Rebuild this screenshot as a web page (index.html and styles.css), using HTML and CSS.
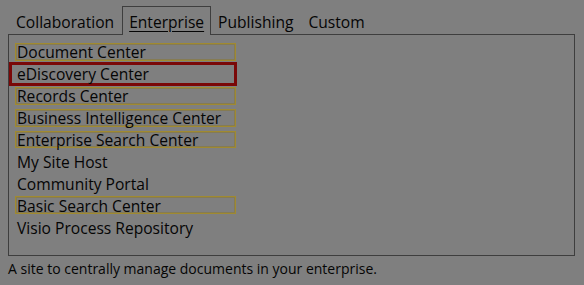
FILE: index.html
```html
<!DOCTYPE html>
<html>
<head>
<meta charset="utf-8">
<link rel="stylesheet" href="styles.css">
</head>
<body>
<div class="dialog">
  <div class="tabs">
    <div class="tab">Collaboration</div>
    <div class="tab active"><span class="u">Enterprise</span></div>
    <div class="tab">Publishing</div>
    <div class="tab">Custom</div>
  </div>
  <div class="panel">
    <ul class="list">
      <li class="item hl">Document Center</li>
      <li class="item sel">eDiscovery Center</li>
      <li class="item hl">Records Center</li>
      <li class="item hl">Business Intelligence Center</li>
      <li class="item hl">Enterprise Search Center</li>
      <li class="item">My Site Host</li>
      <li class="item">Community Portal</li>
      <li class="item hl">Basic Search Center</li>
      <li class="item">Visio Process Repository</li>
    </ul>
  </div>
  <p class="desc">A site to centrally manage documents in your enterprise.</p>
</div>
</body>
</html>
```

FILE: styles.css
```css
html, body {
  margin: 0;
  padding: 0;
  background: #7f7f7f;
}
.dialog {
  font-family: "Open Sans", "Noto Sans", sans-serif;
  color: #050505;
  width: 584px;
  height: 285px;
  padding: 6px 0 0 8px;
  box-sizing: border-box;
}
.tabs {
  display: flex;
  align-items: flex-end;
  height: 28px;
  padding-left: 8px;
  font-size: 15.6px;
}
.tab {
  padding: 0 0 2px 0;
  line-height: 20px;
}
.tab.active {
  border: 1px solid #3e3e3e;
  border-bottom: none;
  background: #7f7f7f;
  padding: 5px 6px 3px 6px;
  margin: 0 7px -1px 8px;
  position: relative;
  z-index: 1;
}
.tab:last-child { margin-left: 15px; }
.u { text-decoration: underline; text-underline-offset: 3px; }
.panel {
  width: 567px;
  height: 222px;
  border: 1px solid #3e3e3e;
  box-sizing: border-box;
  padding: 6px 0 0 0;
}
.list {
  list-style: none;
  margin: 0;
  padding: 0;
  display: flex;
  flex-direction: column;
  font-size: 15.6px;
}
.item {
  height: 21.9px;
  padding: 1px 0 0 8px;
  display: flex;
  align-items: center;
  box-sizing: border-box;
  flex: none;
}
.item.hl {
  margin: 2px 0 2px 6px;
  padding-left: 1px;
  width: 221px;
  height: 17.9px;
  border: 1px solid #a08a30;
  box-shadow: inset 0 0 0 1px rgba(140, 120, 40, 0.5);
}
.item.sel {
  margin: -1px 0;
  padding-left: 5px;
  width: 228px;
  height: 23.9px;
  border: 3px solid #7a0808;
}
.desc {
  margin: 4px 0 0 0;
  font-size: 14px;
  line-height: 18px;
}
```
